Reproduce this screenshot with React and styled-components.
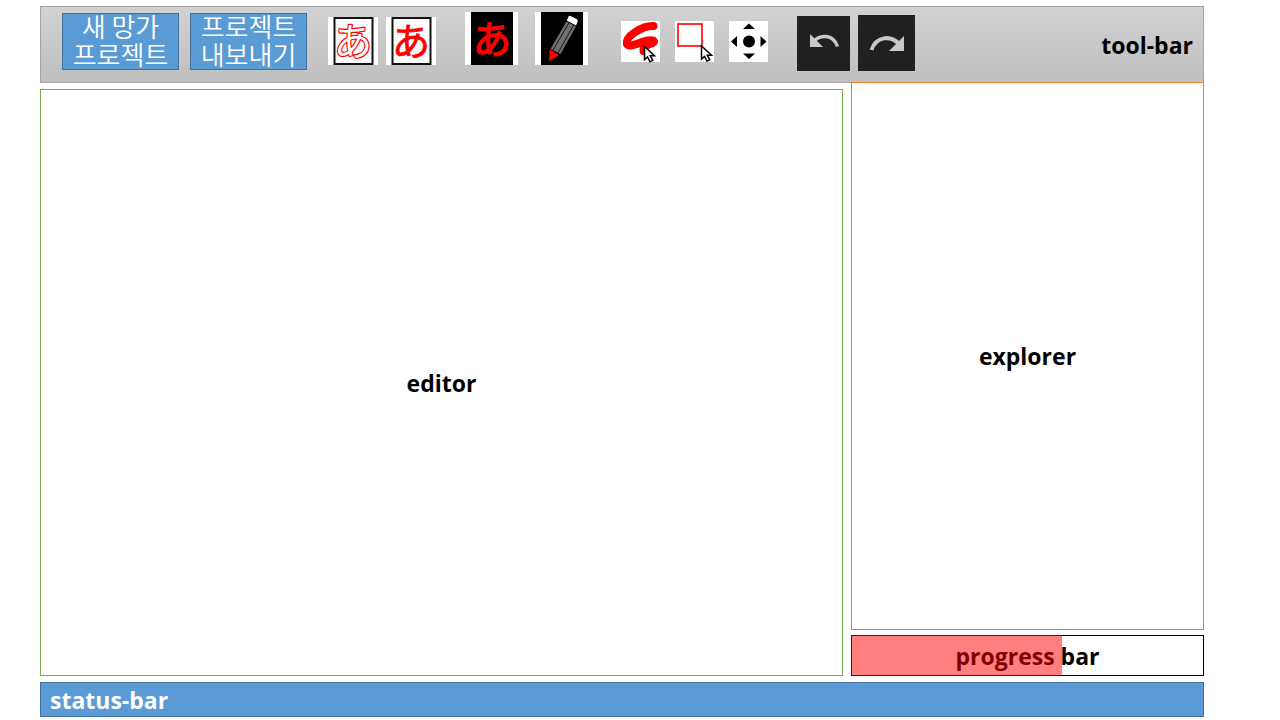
import React from "react";
import styled, { createGlobalStyle } from "styled-components";

const GlobalStyle = createGlobalStyle`
  *, *::before, *::after { box-sizing: border-box; }
  body {
    margin: 0;
    background: #fff;
    color: #000;
    font-family: "Open Sans", "Noto Sans CJK KR", sans-serif;
  }
`;

const Page = styled.div`
  min-height: 100vh;
  padding: 6px 76px 3px 40px;
  display: flex;
  flex-direction: column;
`;

const Toolbar = styled.header`
  height: 77px;
  flex: none;
  display: flex;
  align-items: flex-start;
  padding: 0 10px 0 21px;
  border: 1px solid #a5a5a5;
  background: linear-gradient(#d2d2d2, #bfbfbf);
`;

const Group = styled.div`
  display: flex;
  flex: none;
  align-items: flex-end;
  gap: ${(p) => p.$gap}px;
  margin-top: ${(p) => p.$top}px;
  margin-right: ${(p) => p.$after}px;
`;

const ProjectButton = styled.button`
  width: 117px;
  height: 57px;
  padding: 0 0 4px;
  display: flex;
  align-items: center;
  justify-content: center;
  border: 1px solid #41719c;
  background: #5b9bd5;
  color: #fff;
  font: 350 26px/28px "Noto Sans CJK KR", sans-serif;
  cursor: pointer;
`;

const IconButton = styled.button`
  width: ${(p) => p.$w}px;
  height: ${(p) => p.$h}px;
  padding: 0;
  border: 0;
  background: ${(p) => (p.$dark ? "#202020" : "#fff")};
  cursor: pointer;

  svg { display: block; overflow: visible; }
`;

const Glyph = styled.text`
  font-family: "Noto Sans CJK JP", sans-serif;
  font-size: 38px;
  font-weight: 400;
  text-anchor: middle;
  stroke-linejoin: round;
`;

const Label = styled.span`
  font-size: 23px;
  line-height: 32px;
  font-weight: 700;
`;

const ToolbarLabel = styled(Label)`
  margin-left: auto;
  align-self: center;
`;

const Workspace = styled.main`
  flex: 1;
  display: grid;
  grid-template-columns: minmax(0, 1fr) 353px;
  gap: 8px;
`;

const Editor = styled.section`
  margin-top: 6px;
  display: grid;
  place-items: center;
  border: 1px solid #70ad47;
`;

const Side = styled.aside`
  margin-top: -1px;
  display: flex;
  flex-direction: column;
  gap: 5px;
`;

const Explorer = styled.section`
  flex: 1;
  display: grid;
  place-items: center;
  border: 1px solid #ed7d31;
`;

const Progress = styled.div`
  position: relative;
  height: 41px;
  display: grid;
  place-items: center;
  border: 1px solid #000;
`;

const ProgressFill = styled.div`
  position: absolute;
  inset: -1px auto -1px -1px;
  background: rgba(255, 0, 0, 0.5);
`;

const StatusBar = styled.footer`
  flex: none;
  height: 35px;
  margin-top: 6px;
  padding: 0 9px;
  display: flex;
  align-items: center;
  border: 1px solid #41719c;
  background: #5b9bd5;
  color: #fff;
`;

const OutlineTextIcon = () => (
  <svg width="50" height="48" aria-hidden="true">
    <rect x="6.5" y="1" width="38" height="46" fill="#fff" stroke="#111" strokeWidth="2" />
    <Glyph x="25" y="38" fill="red" stroke="red" strokeWidth="2.4">あ</Glyph>
    <Glyph x="25" y="38" fill="#fff">あ</Glyph>
  </svg>
);

const SolidTextIcon = () => (
  <svg width="50" height="48" aria-hidden="true">
    <rect x="6.5" y="1" width="38" height="46" fill="#fff" stroke="#111" strokeWidth="2" />
    <Glyph x="25" y="38" fill="red" stroke="red" strokeWidth="0.8">あ</Glyph>
  </svg>
);

const MaskTextIcon = () => (
  <svg width="53" height="53" aria-hidden="true">
    <rect x="6" width="42" height="53" fill="#000" />
    <Glyph x="27" y="41" fill="red" stroke="red" strokeWidth="1.4">あ</Glyph>
  </svg>
);

const PencilIcon = () => (
  <svg width="53" height="53" aria-hidden="true">
    <rect x="6" width="42" height="53" fill="#000" />
    <path d="M31.5 9.5 41 14.5 25.5 42 15.5 37Z" fill="#707070" />
    <path d="M34 10.8 18 38.2M38.6 13.2 23 40.8" stroke="#000" strokeWidth="0.8" />
    <path d="M33.5 4.5Q34.5 3 36.5 4.2L41.5 7Q43.5 8 42.6 10L41 13.5 31.8 8.5Z" fill="#fff" />
    <path d="M14.8 37.2 24 43 14 49.3Z" fill="red" />
  </svg>
);

const Cursor = ({ x, y }) => (
  <path
    transform={`translate(${x} ${y})`}
    d="M0 0V13L3 10.4 5.5 15.3 8.3 13.8 5.8 9.3H10Z"
    fill="#fff"
    stroke="#000"
    strokeWidth="1.5"
  />
);

const BrushIcon = () => (
  <svg width="39" height="41" aria-hidden="true">
    <path
      d="M32.5 5C22 4.5 4 15 6 23C9 27.5 19 20.5 27 19.5C34 18.5 34 21 31 22.5C26 24 22 26 22.5 30"
      fill="none"
      stroke="red"
      strokeWidth="8"
      strokeLinecap="round"
      strokeLinejoin="round"
    />
    <Cursor x={23.5} y={25.5} />
  </svg>
);

const RectSelectIcon = () => (
  <svg width="39" height="41" aria-hidden="true">
    <rect x="3" y="3" width="24" height="22" fill="#fff" stroke="red" strokeWidth="1.6" />
    <Cursor x={26.5} y={25} />
  </svg>
);

const MoveIcon = () => (
  <svg width="39" height="41" aria-hidden="true">
    <circle cx="20" cy="20.5" r="6" />
    <path d="M14 8 20 2.5 26 8ZM14 32.5H26L20 38ZM8 15V26L2 20.5ZM31.5 15V26L37.5 20.5Z" />
  </svg>
);

const UndoIcon = () => (
  <svg width="53" height="55" aria-hidden="true">
    <path d="M13 18V31H26Z" fill="#c8c8c8" />
    <path d="M16 26C23 18 36 18 40.5 30.5" fill="none" stroke="#c8c8c8" strokeWidth="3.5" />
  </svg>
);

const RedoIcon = () => (
  <svg width="57" height="56" aria-hidden="true">
    <path d="M46 21V36H31Z" fill="#c8c8c8" />
    <path d="M13.5 35C18 21 33 20 41 29" fill="none" stroke="#c8c8c8" strokeWidth="4" />
  </svg>
);

export default function App() {
  return (
    <>
      <GlobalStyle />
      <Page>
        <Toolbar>
          <Group $top={6} $gap={11} $after={21}>
            <ProjectButton>새 망가<br />프로젝트</ProjectButton>
            <ProjectButton>프로젝트<br />내보내기</ProjectButton>
          </Group>
          <Group $top={10} $gap={8} $after={29}>
            <IconButton $w={50} $h={48} aria-label="Outlined text"><OutlineTextIcon /></IconButton>
            <IconButton $w={50} $h={48} aria-label="Solid text"><SolidTextIcon /></IconButton>
          </Group>
          <Group $top={5} $gap={17} $after={33}>
            <IconButton $w={53} $h={53} aria-label="Text mask"><MaskTextIcon /></IconButton>
            <IconButton $w={53} $h={53} aria-label="Pencil"><PencilIcon /></IconButton>
          </Group>
          <Group $top={14} $gap={15} $after={29}>
            <IconButton $w={39} $h={41} aria-label="Brush select"><BrushIcon /></IconButton>
            <IconButton $w={39} $h={41} aria-label="Rectangle select"><RectSelectIcon /></IconButton>
            <IconButton $w={39} $h={41} aria-label="Move"><MoveIcon /></IconButton>
          </Group>
          <Group $top={8} $gap={8} $after={8}>
            <IconButton $w={53} $h={55} $dark aria-label="Undo"><UndoIcon /></IconButton>
            <IconButton $w={57} $h={56} $dark aria-label="Redo"><RedoIcon /></IconButton>
          </Group>
          <ToolbarLabel>tool-bar</ToolbarLabel>
        </Toolbar>
        <Workspace>
          <Editor><Label>editor</Label></Editor>
          <Side>
            <Explorer><Label>explorer</Label></Explorer>
            <Progress role="progressbar" aria-label="progress" aria-valuemin={0} aria-valuemax={100} aria-valuenow={60}>
              <Label>progress bar</Label>
              <ProgressFill style={{ width: "60%" }} />
            </Progress>
          </Side>
        </Workspace>
        <StatusBar><Label>status-bar</Label></StatusBar>
      </Page>
    </>
  );
}
